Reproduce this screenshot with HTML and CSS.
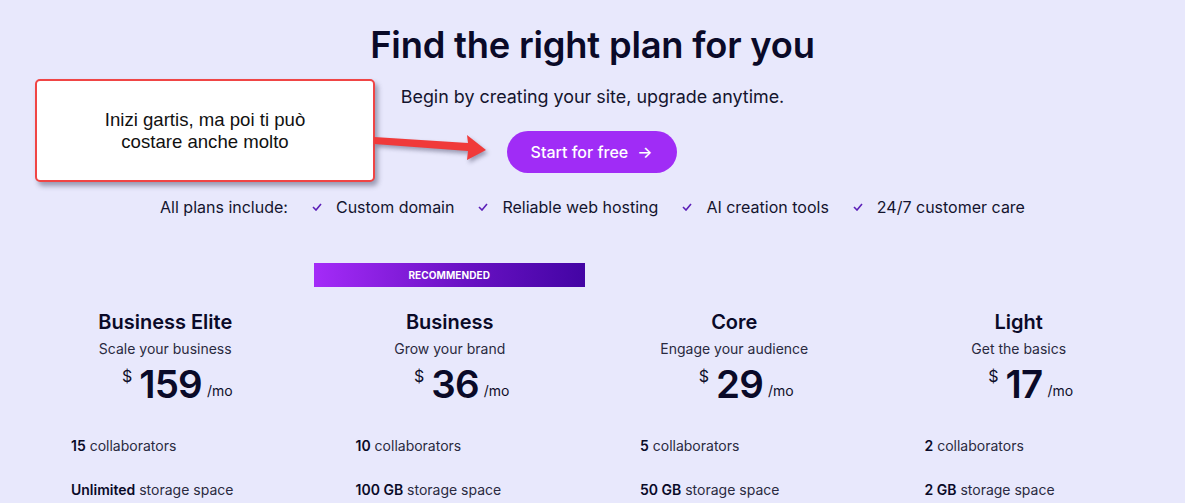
FILE: index.html
```html
<!DOCTYPE html>
<html lang="en">
<head>
<meta charset="utf-8">
<title>Plans</title>
<link rel="stylesheet" href="styles.css">
</head>
<body>
<main class="page">
  <header class="hero">
    <h1 class="title">Find the right plan for you</h1>
    <p class="subtitle">Begin by creating your site, upgrade anytime.</p>
    <a class="cta" href="#">Start for free <span class="cta-arrow">&#8594;</span></a>
    <ul class="includes">
      <li class="includes-label">All plans include:</li>
      <li class="inc"><svg class="check" viewBox="0 0 10 8" width="10" height="8"><polyline points="1,4 4,7 9,1" fill="none" stroke="#5b1fb8" stroke-width="1.6"/></svg>Custom domain</li>
      <li class="inc"><svg class="check" viewBox="0 0 10 8" width="10" height="8"><polyline points="1,4 4,7 9,1" fill="none" stroke="#5b1fb8" stroke-width="1.6"/></svg>Reliable web hosting</li>
      <li class="inc"><svg class="check" viewBox="0 0 10 8" width="10" height="8"><polyline points="1,4 4,7 9,1" fill="none" stroke="#5b1fb8" stroke-width="1.6"/></svg>AI creation tools</li>
      <li class="inc"><svg class="check" viewBox="0 0 10 8" width="10" height="8"><polyline points="1,4 4,7 9,1" fill="none" stroke="#5b1fb8" stroke-width="1.6"/></svg>24/7 customer care</li>
    </ul>
  </header>

  <section class="plans">
    <div class="plan">
      <div class="badge-slot"></div>
      <h2 class="plan-name">Business Elite</h2>
      <p class="plan-tag">Scale your business</p>
      <div class="price"><span class="cur">$</span><span class="amount">159</span><span class="per">/mo</span></div>
      <ul class="features">
        <li><b>15</b> collaborators</li>
        <li><b>Unlimited</b> storage space</li>
      </ul>
    </div>
    <div class="plan">
      <div class="badge-slot"><div class="badge">RECOMMENDED</div></div>
      <h2 class="plan-name">Business</h2>
      <p class="plan-tag">Grow your brand</p>
      <div class="price"><span class="cur">$</span><span class="amount">36</span><span class="per">/mo</span></div>
      <ul class="features">
        <li><b>10</b> collaborators</li>
        <li><b>100 GB</b> storage space</li>
      </ul>
    </div>
    <div class="plan">
      <div class="badge-slot"></div>
      <h2 class="plan-name">Core</h2>
      <p class="plan-tag">Engage your audience</p>
      <div class="price"><span class="cur">$</span><span class="amount">29</span><span class="per">/mo</span></div>
      <ul class="features">
        <li><b>5</b> collaborators</li>
        <li><b>50 GB</b> storage space</li>
      </ul>
    </div>
    <div class="plan">
      <div class="badge-slot"></div>
      <h2 class="plan-name">Light</h2>
      <p class="plan-tag">Get the basics</p>
      <div class="price"><span class="cur">$</span><span class="amount">17</span><span class="per">/mo</span></div>
      <ul class="features">
        <li><b>2</b> collaborators</li>
        <li><b>2 GB</b> storage space</li>
      </ul>
    </div>
  </section>

  <div class="note">Inizi gartis, ma poi ti può<br>costare anche molto</div>
  <svg class="note-arrow" width="130" height="40" viewBox="0 0 130 40">
    <polygon points="0,6 94,12 93,4 112,19 93,29 94,20 0,13" fill="#f03a3a"/>
  </svg>
</main>
</body>
</html>
```

FILE: styles.css
```css
* { box-sizing: border-box; }
html, body { margin: 0; padding: 0; }
body {
  background: #e8e8fc;
  color: #0f0f2a;
  font-family: Inter, "Noto Sans", sans-serif;
  height: 503px;
  overflow: hidden;
}
.page { position: relative; }
.hero {
  display: flex;
  flex-direction: column;
  align-items: center;
  padding-top: 23px;
}
.title {
  margin: 0;
  font-size: 36.3px;
  line-height: 44px;
  font-weight: 600;
  letter-spacing: -0.2px;
  color: #0a0a28;
}
.subtitle {
  margin: 18px 0 0;
  font-size: 17.9px;
  line-height: 24px;
  color: #14142e;
}
.cta {
  margin-top: 22px;
  display: flex;
  align-items: center;
  justify-content: center;
  width: 170px;
  height: 42px;
  border-radius: 21px;
  background: #a02cf6;
  color: #fff;
  text-decoration: none;
  font-size: 16px;
  font-weight: 500;
  transform: translateX(-1px);
}
.cta-arrow { margin-left: 9px; font-size: 16px; }
.includes {
  list-style: none;
  margin: 23px 0 0;
  padding: 0;
  display: flex;
  gap: 24px;
  font-size: 16px;
  line-height: 22px;
  color: #14142e;
}
.inc { display: flex; align-items: center; }
.check { margin-right: 14px; }

.plans {
  display: grid;
  grid-template-columns: repeat(4, 1fr);
  margin: 45px 24px 0 23px;
}
.plan {
  display: flex;
  flex-direction: column;
  align-items: center;
}
.badge-slot {
  align-self: stretch;
  height: 24px;
  padding: 0 7px 0 6px;
}
.badge {
  height: 24px;
  background: linear-gradient(90deg, #a42bf8 0%, #6a12c4 55%, #4304a4 100%);
  color: #fff;
  font-size: 10px;
  font-weight: 700;
  display: flex;
  align-items: center;
  justify-content: center;
  letter-spacing: 0.1px;
}
.plan-name {
  margin: 23px 0 0;
  font-size: 20px;
  line-height: 24px;
  font-weight: 600;
  color: #0a0a28;
}
.plan-tag {
  margin: 6px 0 0;
  font-size: 14px;
  line-height: 18px;
  color: #2a2a40;
}
.price {
  margin-top: 3px;
  padding-left: 24px;
  display: flex;
  align-items: flex-start;
  height: 46px;
}
.cur { font-size: 16px; line-height: 20px; margin-top: 5px; margin-right: 7px; }
.amount { font-size: 38.5px; line-height: 46px; font-weight: 600; color: #0a0a28; letter-spacing: -0.8px; }
.per { font-size: 14px; align-self: flex-end; line-height: 18px; margin-bottom: 7px; margin-left: 5px; }
.features {
  list-style: none;
  align-self: stretch;
  margin: 29px 0 0;
  padding: 0 0 0 48px;
  font-size: 14px;
  line-height: 20px;
  color: #2a2a40;
  display: flex;
  flex-direction: column;
  gap: 24px;
}
.features b { font-weight: 600; color: #0a0a28; }

.note {
  position: absolute;
  left: 35px;
  top: 79px;
  width: 340px;
  height: 103px;
  background: #fff;
  border: 2px solid #f04545;
  border-radius: 5px;
  box-shadow: 3px 4px 5px rgba(60, 60, 90, 0.45);
  font-family: "Liberation Sans", Arial, sans-serif;
  font-size: 18.6px;
  line-height: 22px;
  color: #111;
  display: flex;
  align-items: center;
  justify-content: center;
  text-align: center;
}
.note-arrow {
  position: absolute;
  left: 374px;
  top: 131px;
  filter: drop-shadow(2px 3px 2px rgba(60, 60, 90, 0.45));
}
```
